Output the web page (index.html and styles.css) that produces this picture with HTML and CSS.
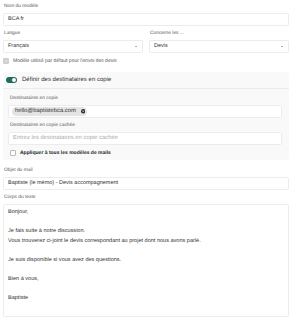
FILE: index.html
```html
<!DOCTYPE html>
<html lang="fr">
<head>
  <meta charset="UTF-8">
  <title>Modèle de mail</title>
  <link rel="stylesheet" href="styles.css">
</head>
<body>
  <div class="form">
    <div class="field">
      <label class="label">Nom du modèle</label>
      <div class="input">BCA fr</div>
    </div>

    <div class="row">
      <div class="field">
        <label class="label">Langue</label>
        <div class="input select">Français <span class="caret"></span></div>
      </div>
      <div class="field">
        <label class="label">Concerne les ...</label>
        <div class="input select">Devis <span class="caret"></span></div>
      </div>
    </div>

    <div class="check">
      <span class="box checked">
        <svg viewBox="0 0 10 10"><path d="M2.2 5.2 4.2 7.1 7.9 3" fill="none" stroke="#fff" stroke-width="1.6"/></svg>
      </span>
      Modèle utilisé par défaut pour l'envoi des devis
    </div>

    <div class="panel">
      <div class="panel-head">
        <span class="toggle"><span class="knob"></span></span>
        Définir des destinataires en copie
      </div>
      <div class="panel-body">
        <div class="field">
          <label class="label">Destinataires en copie</label>
          <div class="input chips">
            <span class="chip">
              <span class="chip-text">hello@baptistebca.com</span>
              <span class="chip-x">
                <svg viewBox="0 0 10 10"><circle cx="5" cy="5" r="5" fill="#333"/><path d="M3.3 3.3 6.7 6.7M6.7 3.3 3.3 6.7" stroke="#e4e4e4" stroke-width="1.3"/></svg>
              </span>
            </span>
          </div>
        </div>
        <div class="field">
          <label class="label">Destinataires en copie cachée</label>
          <div class="input placeholder">Entrez les destinataires en copie cachée</div>
        </div>
        <div class="check strong">
          <span class="box"></span>
          Appliquer à tous les modèles de mails
        </div>
      </div>
    </div>

    <div class="field">
      <label class="label">Objet du mail</label>
      <div class="input">Baptiste (le mémo) - Devis accompagnement</div>
    </div>

    <div class="field">
      <label class="label">Corps du texte</label>
      <div class="input editor">
        <p>Bonjour,</p>
        <p class="empty"></p>
        <p>Je fais suite à notre discussion.</p>
        <p>Vous trouverez ci-joint le devis correspondant au projet dont nous avons parlé.</p>
        <p class="empty"></p>
        <p>Je suis disponible si vous avez des questions.</p>
        <p class="empty"></p>
        <p>Bien à vous,</p>
        <p class="empty"></p>
        <p>Baptiste</p>
      </div>
    </div>
  </div>
</body>
</html>
```

FILE: styles.css
```css
* {
  box-sizing: border-box;
  margin: 0;
  padding: 0;
}

body {
  background: #fff;
  font-family: "Liberation Sans", Arial, sans-serif;
  color: #333;
  text-rendering: geometricPrecision;
}

.form {
  width: 289px;
  padding: 3px 0 0 3px;
}

.field {
  display: flex;
  flex-direction: column;
}

.label {
  font-size: 4.85px;
  color: #555;
  height: 7px;
  line-height: 7px;
  padding-left: 1px;
  margin-bottom: 3px;
}

.input {
  height: 13px;
  border: 1px solid #ececec;
  border-radius: 1.5px;
  background: #fff;
  font-size: 5.5px;
  line-height: 11px;
  padding: 0 4px;
  color: #333;
  margin-bottom: 4px;
  white-space: nowrap;
}

.row {
  display: grid;
  grid-template-columns: 1fr 1fr;
  gap: 6px;
}

.select {
  position: relative;
}

.caret {
  position: absolute;
  right: 5px;
  top: 5px;
  border-left: 1px solid transparent;
  border-right: 1px solid transparent;
  border-top: 1.2px solid #666;
}

.check {
  display: flex;
  align-items: center;
  gap: 4px;
  font-size: 5px;
  color: #555;
  height: 8px;
  margin: 0 0 7px;
}

.box {
  width: 6px;
  height: 6px;
  border: 0.6px solid #bbb;
  border-radius: 1px;
  background: #fff;
  display: flex;
}

.box.checked {
  background: #cfcfcf;
  border-color: #cfcfcf;
}

.box svg {
  width: 100%;
  height: 100%;
}

.panel {
  background: #f9f9f9;
  border-radius: 2px;
  margin-bottom: 7px;
}

.panel-head {
  display: flex;
  align-items: center;
  gap: 5px;
  height: 17px;
  padding-left: 3px;
  font-size: 6.05px;
  color: #333;
  border-bottom: 0.6px solid #ececec;
}

.toggle {
  width: 11px;
  height: 6px;
  border-radius: 3px;
  background: #1c6d5d;
  position: relative;
}

.knob {
  position: absolute;
  right: 0.8px;
  top: 0.8px;
  width: 4.4px;
  height: 4.4px;
  border-radius: 50%;
  background: #fff;
}

.panel-body {
  padding: 6px 7px 3px 5px;
}

.panel-body .label {
  padding-left: 2px;
}

.chips {
  display: flex;
  align-items: center;
  padding: 0 3px;
}

.chip {
  display: flex;
  align-items: center;
  height: 8.5px;
  padding: 0 2px 0 3px;
  border-radius: 4.25px;
  background: #e4e4e4;
}

.chip-text {
  font-size: 5.85px;
  line-height: 8.5px;
  color: #333;
}

.chip-x {
  display: flex;
  width: 4.4px;
  height: 4.4px;
  margin-left: 5px;
}

.chip-x svg {
  width: 100%;
  height: 100%;
}

.placeholder {
  color: #aaa;
  font-size: 5.85px;
}

.strong {
  color: #222;
  font-weight: 700;
  padding-left: 2px;
  margin-bottom: 0;
}

.editor {
  height: 113px;
  padding: 3px 4px;
  font-size: 5.55px;
  line-height: 9.6px;
}

.editor .empty {
  height: 9.6px;
}
```
